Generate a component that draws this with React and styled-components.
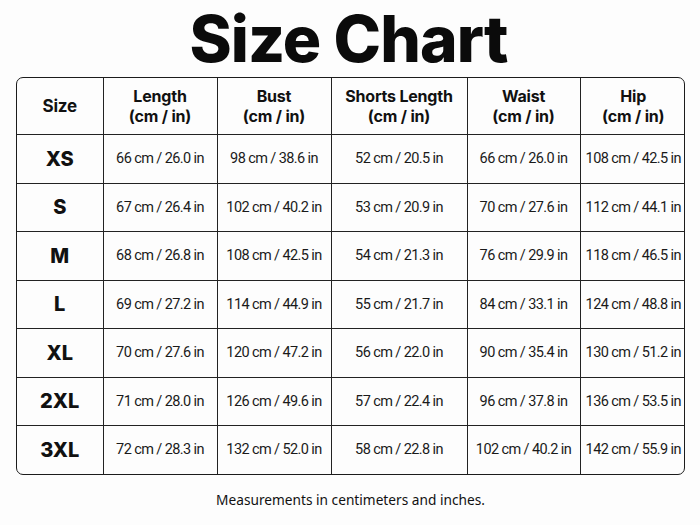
import React from 'react'
import styled, { createGlobalStyle } from 'styled-components'

const GlobalStyle = createGlobalStyle`
  html, body {
    margin: 0;
    padding: 0;
    background: #fdfdfd;
  }
`

const Page = styled.div`
  width: 700px;
  height: 525px;
  box-sizing: border-box;
  padding: 0 15px 0 16px;
  display: flex;
  flex-direction: column;
  align-items: center;
  color: #111;
`

const Title = styled.h1`
  margin: 0 4px 0 0;
  height: 77px;
  display: flex;
  align-items: center;
  font-family: Inter, sans-serif;
  font-weight: 800;
  font-size: 64px;
  letter-spacing: -0.9px;
  line-height: 1;
  color: #0b0b0b;
`

const Frame = styled.div`
  width: 100%;
  box-sizing: border-box;
  border: 1.5px solid #1c1c1c;
  border-radius: 7px;
  overflow: hidden;
`

const Table = styled.table`
  width: 100%;
  border-collapse: collapse;
  table-layout: fixed;
`

const Head = styled.th`
  height: 56px;
  padding: 0;
  font-family: Inter, sans-serif;
  font-weight: 700;
  font-size: ${(p) => (p.$first ? '17px' : '16px')};
  line-height: 20px;
  letter-spacing: -0.2px;
  color: #111;
  border-right: 1px solid #222;
  border-bottom: 1px solid #222;
  &:last-child {
    border-right: none;
  }
`

const Row = styled.tr`
  &:last-child td {
    border-bottom: none;
  }
`

const SizeCell = styled.td`
  height: 47.5px;
  padding: 0;
  text-align: center;
  font-family: Inter, sans-serif;
  font-weight: 800;
  font-size: 20px;
  color: #111;
  border-right: 1px solid #222;
  border-bottom: 1px solid #222;
`

const Cell = styled.td`
  height: 47.5px;
  padding: 0;
  text-align: center;
  font-family: Roboto, sans-serif;
  font-size: 14.5px;
  letter-spacing: -0.6px;
  color: #1a1a1a;
  white-space: nowrap;
  border-right: 1px solid #222;
  border-bottom: 1px solid #222;
  &:last-child {
    border-right: none;
  }
`

const Note = styled.p`
  margin: 0;
  flex: 1;
  display: flex;
  align-items: center;
  font-family: 'Noto Sans', sans-serif;
  font-size: 13.7px;
  color: #111;
`

const columns = [
  { label: 'Size', width: 86 },
  { label: 'Length', width: 114 },
  { label: 'Bust', width: 114 },
  { label: 'Shorts Length', width: 136 },
  { label: 'Waist', width: 113 },
  { label: 'Hip', width: 106 },
]

const rows = [
  ['XS', 66, 98, 52, 66, 108],
  ['S', 67, 102, 53, 70, 112],
  ['M', 68, 108, 54, 76, 118],
  ['L', 69, 114, 55, 84, 124],
  ['XL', 70, 120, 56, 90, 130],
  ['2XL', 71, 126, 57, 96, 136],
  ['3XL', 72, 132, 58, 102, 142],
]

const fmt = (cm) => `${cm} cm / ${(cm / 2.54).toFixed(1)} in`

export default function App() {
  return (
    <>
      <GlobalStyle />
      <Page>
        <Title>Size Chart</Title>
        <Frame>
          <Table>
            <colgroup>
              {columns.map((c) => (
                <col key={c.label} style={{ width: c.width }} />
              ))}
            </colgroup>
            <thead>
              <tr>
                {columns.map((c, i) =>
                  i === 0 ? (
                    <Head key={c.label} $first>
                      Size
                    </Head>
                  ) : (
                    <Head key={c.label}>
                      {c.label}
                      <br />
                      (cm / in)
                    </Head>
                  )
                )}
              </tr>
            </thead>
            <tbody>
              {rows.map(([size, ...vals]) => (
                <Row key={size}>
                  <SizeCell>{size}</SizeCell>
                  {vals.map((v, i) => (
                    <Cell key={i}>{fmt(v)}</Cell>
                  ))}
                </Row>
              ))}
            </tbody>
          </Table>
        </Frame>
        <Note>Measurements in centimeters and inches.</Note>
      </Page>
    </>
  )
}
